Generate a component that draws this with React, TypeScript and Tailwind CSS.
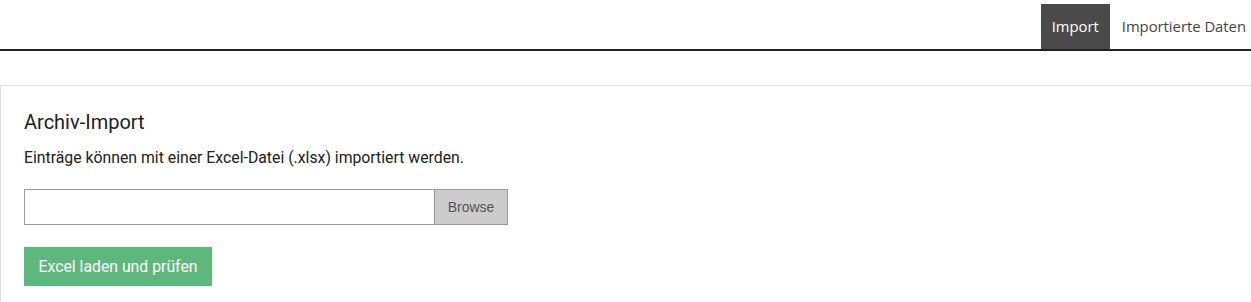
export default function App() {
  return (
    <div className="min-h-[302px] bg-white">
      <nav className="flex h-[51px] items-end justify-end border-b-2 border-[#222] font-['Open_Sans',sans-serif] text-[14.8px]">
        <a className="flex h-[45px] items-center bg-[#4a4a4a] px-[11px] text-white">Import</a>
        <a className="flex h-[45px] items-center pl-[12px] pr-[5px] text-[#444]">Importierte Daten</a>
      </nav>
      <section className="mt-[34px] border-l border-t border-[#e0e0e0] px-[23px] pb-[20px] pt-[22px] font-['Roboto',sans-serif]">
        <h2 className="text-[20px] leading-[28px] text-[#222]">Archiv-Import</h2>
        <p className="mt-[11px] text-[15.8px] leading-[22px] text-[#222]">
          Einträge können mit einer Excel-Datei (.xlsx) importiert werden.
        </p>
        <div className="mt-[20px] flex h-[36px] w-[484px] border border-[#9a9a9a]">
          <div className="flex-1 bg-white" />
          <button className="w-[73px] border-l border-[#9a9a9a] bg-[#cccccc] font-['Liberation_Sans',sans-serif] text-[14px] text-[#555]">
            Browse
          </button>
        </div>
        <button className="mt-[22px] h-[39px] w-[188px] bg-[#5eb87e] text-[15.8px] text-white">
          Excel laden und prüfen
        </button>
      </section>
    </div>
  )
}
